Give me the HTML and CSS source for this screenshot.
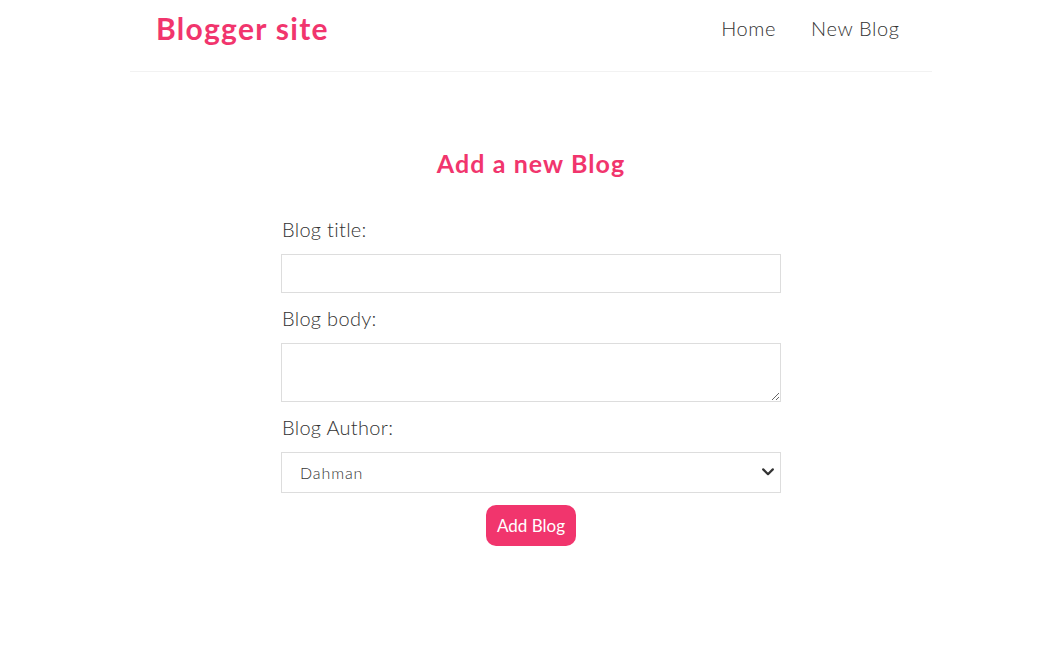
FILE: index.html
```html
<!DOCTYPE html>
<html lang="en">
<head>
<meta charset="utf-8">
<title>Blogger site</title>
<link rel="stylesheet" href="styles.css">
</head>
<body>
<nav class="navbar">
  <h1 class="brand">Blogger site</h1>
  <div class="links">
    <a href="#" class="link">Home</a>
    <a href="#" class="link">New Blog</a>
  </div>
</nav>
<main class="content">
  <div class="create">
    <h2 class="create-title">Add a new Blog</h2>
    <form class="form">
      <label class="label">Blog title:</label>
      <input class="field field-input" type="text">
      <label class="label">Blog body:</label>
      <textarea class="field field-area"></textarea>
      <label class="label">Blog Author:</label>
      <div class="select-wrap">
        <select class="field field-select">
          <option>Dahman</option>
          <option>Yoshi</option>
        </select>
        <svg class="chevron" width="12" height="8" viewBox="0 0 12 8"><path d="M1.2 1.4 L6 6.2 L10.8 1.4" fill="none" stroke="#333" stroke-width="2.2" stroke-linecap="round" stroke-linejoin="round"/></svg>
      </div>
      <button class="btn" type="button">Add Blog</button>
    </form>
  </div>
</main>
</body>
</html>
```
FILE: styles.css
```css
* {
  margin: 0;
  font-family: "Lato", "Open Sans", sans-serif;
  color: #333;
}

body {
  margin: 0;
  background: #fff;
}

.navbar {
  box-sizing: border-box;
  width: 802px;
  margin: 0 auto;
  padding: 10px 25px 25px 26px;
  display: flex;
  align-items: center;
  border-bottom: 1px solid #f2f2f2;
  height: 72px;
}

.brand {
  font-size: 30px;
  line-height: 36px;
  font-weight: 700;
  color: #f1356d;
  letter-spacing: 1.3px;
}

.links {
  margin-left: auto;
  display: flex;
  align-items: center;
  padding-top: 0;
}

.link {
  font-size: 20px;
  font-weight: 300;
  margin-left: 20px;
  padding: 7px 7.5px;
  text-decoration: none;
  color: #333;
  letter-spacing: 0.6px;
}

.content {
  width: 500px;
  margin: 76px auto 0;
}

.create {
  text-align: center;
}

.create-title {
  font-size: 25px;
  line-height: 30px;
  font-weight: 700;
  color: #f1356d;
  margin-bottom: 39px;
  letter-spacing: 1.1px;
}

.form {
  display: flex;
  flex-direction: column;
  align-items: center;
}

.label {
  align-self: stretch;
  text-align: left;
  display: block;
  font-size: 20px;
  font-weight: 300;
  line-height: 24px;
  padding-left: 1px;
  letter-spacing: 0.3px;
}

.field {
  display: block;
  width: 100%;
  box-sizing: border-box;
  border: 1px solid #ddd;
  border-radius: 0;
  padding: 7px 12.5px;
  margin: 13px 0 12.5px;
  font-size: 16px;
  background: #fff;
  outline: none;
}

.field-input {
  height: 39px;
}

.field-area {
  height: 59px;
  resize: vertical;
  margin-top: 13.5px;
}

.select-wrap {
  position: relative;
  align-self: stretch;
}

.field-select {
  height: 41px;
  margin-top: 13px;
  -webkit-appearance: none;
  appearance: none;
  padding-left: 18px;
  font-size: 16px;
  font-weight: 300;
  letter-spacing: 0.9px;
  color: #333;
}

.chevron {
  position: absolute;
  right: 7px;
  top: 29px;
  pointer-events: none;
}

.btn {
  background: #f1356d;
  color: #fff;
  border: 0;
  border-radius: 10px;
  width: 90px;
  height: 41px;
  font-size: 17px;
  cursor: pointer;
  padding: 0;
}
```
